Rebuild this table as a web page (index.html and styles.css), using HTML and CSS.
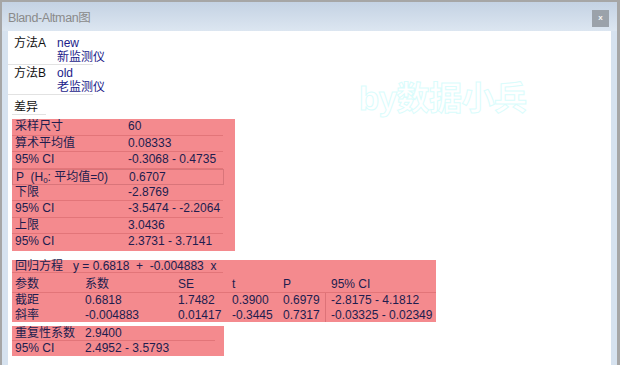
FILE: index.html
```html
<!DOCTYPE html>
<html lang="zh">
<head>
<meta charset="utf-8">
<title>Bland-Altman图</title>
<link rel="stylesheet" href="styles.css">
</head>
<body>
<div class="win">
  <div class="titlebar">
    <span class="title">Bland-Altman图</span>
    <span class="close">x</span>
  </div>
  <div class="content">
    <div class="watermark">by数据小兵</div>
    <div class="method first">
      <span class="mlabel">方法A</span>
      <span class="mval">new<br>新监测仪</span>
    </div>
    <div class="method">
      <span class="mlabel">方法B</span>
      <span class="mval">old<br>老监测仪</span>
    </div>
    <div class="diff"><span>差异</span></div>

    <div class="block b1">
      <div class="row"><span>采样尺寸</span><span>60</span></div>
      <div class="row"><span>算术平均值</span><span>0.08333</span></div>
      <div class="row"><span>95% CI</span><span>-0.3068 - 0.4735</span></div>
      <div class="row boxed"><span>P &nbsp;(H<sub>0</sub>: 平均值=0)</span><span>0.6707</span></div>
      <div class="row"><span>下限</span><span>-2.8769</span></div>
      <div class="row"><span>95% CI</span><span>-3.5474 - -2.2064</span></div>
      <div class="row"><span>上限</span><span>3.0436</span></div>
      <div class="row last"><span>95% CI</span><span>2.3731 - 3.7141</span></div>
    </div>

    <div class="block b2">
      <div class="eq"><span>回归方程</span><span class="pre">y = 0.6818  +  -0.004883  x</span></div>
      <div class="trow head"><span>参数</span><span>系数</span><span>SE</span><span>t</span><span>P</span><span class="ci">95% CI</span></div>
      <div class="trow"><span>截距</span><span>0.6818</span><span>1.7482</span><span>0.3900</span><span>0.6979</span><span class="ci line">-2.8175 - 4.1812</span></div>
      <div class="trow lastrow"><span>斜率</span><span>-0.004883</span><span>0.01417</span><span>-0.3445</span><span>0.7317</span><span class="ci line">-0.03325 - 0.02349</span></div>
    </div>

    <div class="block b3">
      <div class="row r3"><span>重复性系数</span><span>2.9400</span></div>
      <div class="row r3 last"><span>95% CI</span><span>2.4952 - 3.5793</span></div>
    </div>
  </div>
</div>
</body>
</html>
```

FILE: styles.css
```css
html, body {
  margin: 0;
  padding: 0;
}
body {
  width: 620px;
  height: 365px;
  overflow: hidden;
  font-family: "Liberation Sans", "Noto Sans CJK SC", sans-serif;
  font-size: 12px;
}
.win {
  box-sizing: border-box;
  width: 620px;
  height: 365px;
  border-top: 2px solid #a6a6a6;
  border-left: 2px solid #a6a6a6;
  border-right: 3px solid #a6a6a6;
  padding: 0 6px;
  background: linear-gradient(to bottom, #c4d2e3 0px, #dce6f1 29px, #d6e2ef 29px);
  display: flex;
  flex-direction: column;
}
.titlebar {
  height: 29px;
  flex: none;
  display: flex;
  align-items: flex-start;
  justify-content: space-between;
}
.title {
  margin-top: 8px;
  color: #8a8a8a;
  font-size: 12.5px;
  letter-spacing: -0.4px;
  line-height: 16px;
}
.close {
  margin-top: 8px;
  margin-right: 2px;
  width: 17px;
  height: 17px;
  background: #9ba2aa;
  color: #f4f4f4;
  font-size: 8px;
  font-weight: bold;
  line-height: 15px;
  text-align: center;
}
.content {
  flex: 1;
  min-height: 0;
  background: #fff;
  padding: 4px 0 0 4px;
  position: relative;
}
.watermark {
  position: absolute;
  left: 351px;
  top: 48px;
  font-size: 33px;
  font-weight: bold;
  line-height: 40px;
  color: #ffffff;
  -webkit-text-stroke: 1px #dafcfc;
  letter-spacing: -0.5px;
}
.method {
  display: flex;
  width: 79px;
  margin-left: -4px;
  padding: 2px 0 0 6px;
  border-bottom: 1px solid #e2e2e2;
  line-height: 13.5px;
}
.mlabel {
  width: 43px;
  flex: none;
  color: #111;
}
.mval {
  color: #1c1c8a;
  white-space: nowrap;
}
.diff {
  margin-top: 5px;
  line-height: 14px;
}
.diff span {
  display: inline-block;
  padding: 0 8px 0 2px;
  color: #111;
  border-bottom: 1px solid #e2e2e2;
}
.block {
  background: #f48a8e;
  color: #211d4e;
}
.b1 {
  margin-top: 4px;
  width: 223px;
  padding-bottom: 1px;
}
.row {
  display: grid;
  grid-template-columns: 113px 1fr;
  width: 208px;
  height: 15.5px;
  line-height: 15.5px;
  padding-left: 3px;
  border-bottom: 0.5px solid #e27579;
  white-space: nowrap;
}
.row.last {
  border-bottom: none;
}
.row.boxed {
  width: 207px;
  border: 1px solid #d9757a;
  height: 14px;
  line-height: 14px;
}
sub {
  font-size: 8px;
  vertical-align: -2px;
  line-height: 0;
}
.b2 {
  margin-top: 9px;
  width: 424px;
}
.eq {
  display: grid;
  grid-template-columns: 58px 1fr;
  width: 208px;
  padding-left: 3px;
  height: 12px;
  line-height: 12px;
  border-bottom: 1px solid #e27579;
  white-space: nowrap;
}
.pre {
  white-space: pre;
}
.trow {
  display: grid;
  grid-template-columns: 70px 93px 54px 51px 42px 1fr;
  padding-left: 3px;
  line-height: 15px;
  height: 15px;
  white-space: nowrap;
}
.trow.head {
  padding-top: 4px;
  border-bottom: 0.5px solid #e27579;
}
.trow.lastrow {
  height: 14px;
  line-height: 14px;
}
.ci {
  padding-left: 6px;
}
.ci.line {
  padding-left: 5px;
  border-left: 1px solid #dd7378;
}
.b3 {
  margin-top: 4px;
  width: 212px;
}
.r3 {
  grid-template-columns: 70px 1fr;
  width: 200px;
  height: 14px;
  line-height: 14px;
}
.r3.last {
  height: 15px;
  line-height: 15px;
}
```
